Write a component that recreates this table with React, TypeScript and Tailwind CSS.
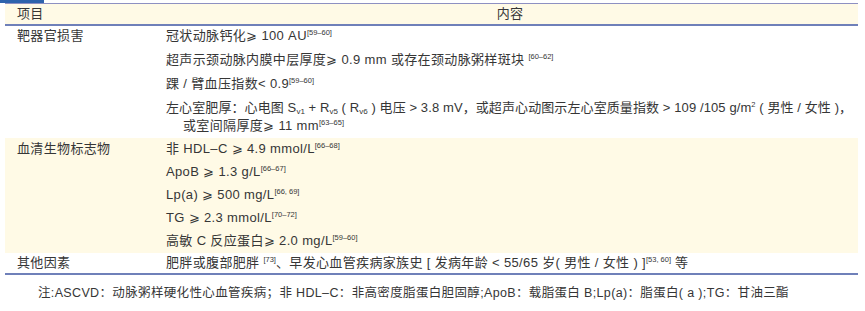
import React from "react";

const F = { fontFamily: '"Liberation Sans", "Noto Sans CJK SC", sans-serif' };

function Sup({ children }: { children: React.ReactNode }) {
  return <sup className="text-[7.5px] -top-[5px] tracking-normal">{children}</sup>;
}
function Sub({ children }: { children: React.ReactNode }) {
  return <sub className="text-[8px] -bottom-[2px] tracking-normal">{children}</sub>;
}

export default function App() {
  return (
    <div className="w-[865px] h-[311px] bg-white text-[#363636] text-[13px] tracking-[0.35px]" style={F}>
      <div className="h-[3px] flex">
        <div className="w-[44px] h-[3px] bg-[#2e63ad]" />
      </div>
      <div className="ml-[5px] w-[853px]">
        <div className="flex h-[23px] bg-[#fffae6] border-t border-[#8e90c2] border-b-2 border-b-[#6f80b9] leading-[20px]">
          <div className="w-[149px] pl-3">项目</div>
          <div className="flex-1 text-center pl-[8px]">内容</div>
        </div>
        <div className="flex leading-[18px] pt-[1px] pb-[3px]">
          <div className="w-[149px] pl-3">靶器官损害</div>
          <div className="flex-1 pl-3 flex flex-col gap-[6px]">
            <div>冠状动脉钙化⩾ 100 AU<Sup>[59–60]</Sup></div>
            <div>超声示颈动脉内膜中层厚度⩾ 0.9 mm 或存在颈动脉粥样斑块 <Sup>[60–62]</Sup></div>
            <div>踝 / 臂血压指数&lt; 0.9<Sup>[59–60]</Sup></div>
            <div className="pl-[17px] -indent-[17px]">
              <span className="whitespace-nowrap tracking-[0.1px]">左心室肥厚：心电图 S<Sub>v1</Sub> + R<Sub>v5</Sub> ( R<Sub>v6</Sub> ) 电压 &gt; 3.8 mV，或超声心动图示左心室质量指数 &gt; 109 /105 g/m<Sup>2</Sup> ( 男性 / 女性 )，</span>
              <br />
              或室间隔厚度⩾ 11 mm<Sup>[63–65]</Sup>
            </div>
          </div>
        </div>
        <div className="flex leading-[18px] pt-[2px] pb-[3px] bg-[#fffae6]">
          <div className="w-[149px] pl-3">血清生物标志物</div>
          <div className="flex-1 pl-3 flex flex-col gap-[5px]">
            <div>非 HDL–C ⩾ 4.9 mmol/L<Sup>[66–68]</Sup></div>
            <div>ApoB ⩾ 1.3 g/L<Sup>[66–67]</Sup></div>
            <div>Lp(a) ⩾ 500 mg/L<Sup>[66, 69]</Sup></div>
            <div>TG ⩾ 2.3 mmol/L<Sup>[70–72]</Sup></div>
            <div>高敏 C 反应蛋白⩾ 2.0 mg/L<Sup>[59–60]</Sup></div>
          </div>
        </div>
        <div className="flex leading-[18px] pt-[1px] pb-[1px] border-b-2 border-[#6f80b9]">
          <div className="w-[149px] pl-3">其他因素</div>
          <div className="flex-1 pl-3">
            肥胖或腹部肥胖 <Sup>[73]</Sup>、早发心血管疾病家族史 [ 发病年龄 &lt; 55/65 岁( 男性 / 女性 ) ]<Sup>[53, 60]</Sup> 等
          </div>
        </div>
      </div>
      <div className="pl-[38px] pt-[9px] text-[12.5px] leading-[18px]">
        注:ASCVD：动脉粥样硬化性心血管疾病；非 HDL–C：非高密度脂蛋白胆固醇;ApoB：载脂蛋白 B;Lp(a)：脂蛋白( a );TG：甘油三酯
      </div>
    </div>
  );
}
